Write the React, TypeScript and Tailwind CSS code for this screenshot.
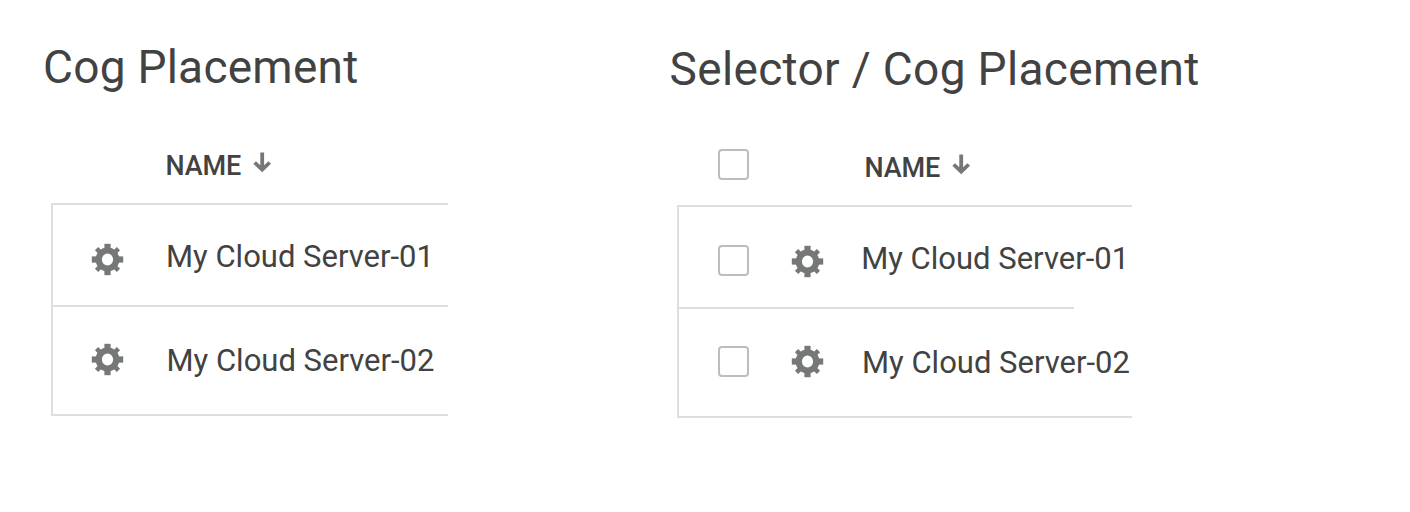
import React from "react";

function Cog({ className = "" }: { className?: string }) {
  return (
    <svg viewBox="-15.5 -15.5 31 31" className={`block size-[31px] shrink-0 overflow-visible ${className}`} fill="#757877">
      <path fillRule="evenodd" d="M0-11.9A11.9 11.9 0 1 1 0 11.9A11.9 11.9 0 1 1 0-11.9ZM0-6A5.6 6 0 1 0 0 6A5.6 6 0 1 0 0-6Z" />
      {[0, 90, 180, 270].map((a) => (
        <rect key={a} x="-3.1" y="-15.7" width="6.2" height="6" transform={`rotate(${a})`} />
      ))}
      {[45, 135, 225, 315].map((a) => (
        <rect key={a} x="-2.3" y="-15.5" width="4.6" height="6" transform={`rotate(${a})`} />
      ))}
    </svg>
  );
}

function SortArrow({ className = "" }: { className?: string }) {
  return (
    <svg viewBox="0 0 18 20" className={`block h-5 w-[18px] shrink-0 overflow-visible ${className}`} fill="none" stroke="#757877" strokeWidth="3.8">
      <path d="M9.2 0.4V17.4M1.7 10.5L9.2 17.7L16.7 10.5" />
    </svg>
  );
}

function Checkbox({ className = "" }: { className?: string }) {
  return (
    <span
      role="checkbox"
      aria-checked="false"
      className={`block size-[31px] shrink-0 rounded-[4px] border-2 border-[#bdbdbd] bg-white ${className}`}
    />
  );
}

const nameText = "text-[31px] leading-9 whitespace-nowrap";

export default function App() {
  return (
    <main className="flex h-[512px] w-[1410px] overflow-hidden bg-white font-['Roboto',sans-serif] text-[#424242]">
      <section className="w-[626px] shrink-0 pt-[37px]">
        <h1 className="pl-[43px] text-[46px] leading-[60px] tracking-[0.25px] whitespace-nowrap">Cog Placement</h1>
        <div className="mt-[50px] flex h-[56px] pl-[165.5px]">
          <span className="mt-[3px] w-[87.5px] text-[27px] leading-8 font-medium tracking-[-0.1px]">NAME</span>
          <SortArrow className="mt-[5px]" />
        </div>
        <div className="ml-[51px] w-[397px] border-y-2 border-l-2 border-[#dedede]">
          <div className="flex h-[102px] border-b-2 border-[#dedede] pl-[39px]">
            <Cog className="mt-[39px]" />
            <span className={`mt-[34px] ml-[43px] ${nameText}`}>My Cloud Server-01</span>
          </div>
          <div className="flex h-[107px] pl-[39px]">
            <Cog className="mt-[37px]" />
            <span className={`mt-[36px] ml-[43.5px] ${nameText}`}>My Cloud Server-02</span>
          </div>
        </div>
      </section>
      <section className="grow pt-[39px]">
        <h1 className="pl-[43.5px] text-[46px] leading-[60px] tracking-[0.34px] whitespace-nowrap">Selector / Cog Placement</h1>
        <div className="mt-[50px] flex h-[56px] pl-[92px]">
          <Checkbox />
          <span className="mt-[3px] ml-[115.5px] w-[87.5px] text-[27px] leading-8 font-medium tracking-[-0.1px]">NAME</span>
          <SortArrow className="mt-[5px]" />
        </div>
        <div className="ml-[51px] w-[455px] border-y-2 border-l-2 border-[#dedede]">
          <div className="flex h-[102px] w-[395px] border-b-2 border-[#dedede] pl-[39px]">
            <Checkbox className="mt-[38px]" />
            <Cog className="mt-[39px] ml-[43px]" />
            <span className={`mt-[34px] ml-[38.2px] ${nameText}`}>My Cloud Server-01</span>
          </div>
          <div className="flex h-[107px] pl-[39px]">
            <Checkbox className="mt-[37px]" />
            <Cog className="mt-[37px] ml-[43px]" />
            <span className={`mt-[36px] ml-[39px] ${nameText}`}>My Cloud Server-02</span>
          </div>
        </div>
      </section>
    </main>
  );
}
